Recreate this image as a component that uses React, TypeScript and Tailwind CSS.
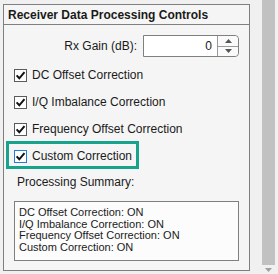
import React from "react";

function Check({ focused }: { focused?: boolean }) {
  return (
    <div
      className={`w-[13px] h-[13px] border bg-white flex items-center justify-center ${
        focused ? "border-[#1f7fd6]" : "border-[#5a5a5a]"
      }`}
    >
      <svg width="11" height="11" viewBox="0 0 11 11">
        <path d="M1.6 5.4 L4.3 8.3 L9.5 2.1" fill="none" stroke="#111" strokeWidth="2" />
      </svg>
    </div>
  );
}

function Row({ label, focused }: { label: string; focused?: boolean }) {
  return (
    <div className="flex items-center h-[13px] ml-[10px]">
      <Check focused={focused} />
      <span className="ml-[5px] text-[12px] leading-[13px] text-[#1a1a1a]">{label}</span>
    </div>
  );
}

export default function App() {
  return (
    <div
      className="w-[278px] h-[274px] bg-[#f0f0f0] flex overflow-hidden"
      style={{ fontFamily: '"Liberation Sans", Arial, sans-serif' }}
    >
      <div className="relative ml-[3px] mt-[4px] w-[247px] h-[267px] border border-[#7f7f7f] bg-[#f5f5f5] flex flex-col">
        <div className="h-[20px] border-b border-[#7f7f7f] flex items-center pl-[4px] text-[12px] font-bold text-[#1a1a1a]">
          Receiver Data Processing Controls
        </div>
        <div className="flex items-center mt-[10px] h-[22px]">
          <span className="w-[133px] text-right text-[12px] text-[#1a1a1a]">Rx Gain (dB):</span>
          <div className="ml-[6px] w-[96px] h-[22px] border border-[#7f7f7f] rounded-r-[4px] bg-white flex">
            <div className="flex-1 flex items-center justify-end pr-[5px] text-[12px] text-[#1a1a1a]">0</div>
            <div className="w-[21px] border-l border-[#9a9a9a] flex flex-col bg-[#fafafa] rounded-r-[4px]">
              <div className="flex-1 flex items-center justify-center border-b border-[#9a9a9a]">
                <svg width="7" height="4" viewBox="0 0 7 4"><path d="M0 4 L3.5 0 L7 4 Z" fill="#555" /></svg>
              </div>
              <div className="flex-1 flex items-center justify-center">
                <svg width="7" height="4" viewBox="0 0 7 4"><path d="M0 0 L3.5 4 L7 0 Z" fill="#555" /></svg>
              </div>
            </div>
          </div>
        </div>
        <div className="mt-[12px] flex flex-col gap-[14px]">
          <Row label="DC Offset Correction" />
          <Row label="I/Q Imbalance Correction" />
          <Row label="Frequency Offset Correction" />
          <Row label="Custom Correction" focused />
        </div>
        <div className="mt-[12px] ml-[13px] text-[12px] leading-[14px] text-[#1a1a1a]">Processing Summary:</div>
        <div className="mt-[12px] ml-[10px] w-[225px] h-[60px] border border-[#7f7f7f] bg-[#fcfcfc] pt-[5px] pl-[4px] text-[11px] leading-[11.7px] text-[#1a1a1a]">
          <div>DC Offset Correction: ON</div>
          <div>I/Q Imbalance Correction: ON</div>
          <div>Frequency Offset Correction: ON</div>
          <div>Custom Correction: ON</div>
        </div>
        <div className="absolute left-[2px] top-[136px] w-[133px] h-[28px] border-[3px] border-[#18a48c]" />
      </div>
      <div className="ml-[11px] w-[17px] flex flex-col items-start">
        <div className="ml-[1px] w-[13px] h-[265px] bg-[#c1c1c1]" />
        <div className="ml-[4px] mt-[3px]">
          <svg width="7" height="4" viewBox="0 0 7 4"><path d="M0 0 L3.5 4 L7 0 Z" fill="#a0a0a0" /></svg>
        </div>
      </div>
    </div>
  );
}
